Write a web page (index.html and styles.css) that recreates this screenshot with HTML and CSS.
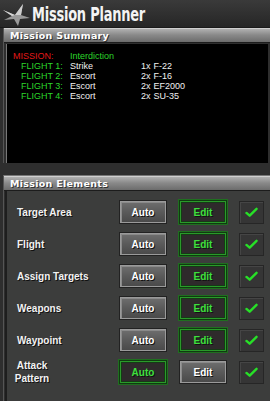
FILE: index.html
```html
<!DOCTYPE html>
<html>
<head>
<meta charset="utf-8">
<link rel="stylesheet" href="styles.css">
</head>
<body>
<div class="app">
  <div class="titlebar">
    <svg class="logo" width="30" height="28" viewBox="0 0 30 28">
      <path d="M2 10 L14 15 L22 4 L20 15 L29 18 L19 19 L17 26 L13 19 L3 20 L11 16 Z" fill="#9a9a9a"/>
      <path d="M14 15 L22 4 L20 15 Z" fill="#cfcfcf"/>
      <path d="M2 10 L14 15 L11 16 Z" fill="#d8d8d8"/>
    </svg>
    <h1 class="title">Mission Planner</h1>
  </div>

  <div class="section">
    <div class="header">Mission Summary</div>
    <div class="summary">
      <div class="srow"><span class="c1 red">MISSION:</span><span class="c2 green">Interdiction</span><span class="c3"></span></div>
      <div class="srow"><span class="c1 green ind">FLIGHT 1:</span><span class="c2">Strike</span><span class="c3"><span class="qty">1x</span>F-22</span></div>
      <div class="srow"><span class="c1 green ind">FLIGHT 2:</span><span class="c2">Escort</span><span class="c3"><span class="qty">2x</span>F-16</span></div>
      <div class="srow"><span class="c1 green ind">FLIGHT 3:</span><span class="c2">Escort</span><span class="c3"><span class="qty">2x</span>EF2000</span></div>
      <div class="srow"><span class="c1 green ind">FLIGHT 4:</span><span class="c2">Escort</span><span class="c3"><span class="qty">2x</span>SU-35</span></div>
    </div>
  </div>

  <div class="section elements-section">
    <div class="header">Mission Elements</div>
    <div class="elements">
      <div class="erow"><div class="label">Target Area</div><div class="btn">Auto</div><div class="btn on">Edit</div><div class="check"><svg viewBox="0 0 14 12" width="13" height="11"><path d="M1.5 6.5 L5 9.5 L12.5 2" fill="none" stroke="#27e027" stroke-width="2.6" stroke-linecap="round" stroke-linejoin="round"/></svg></div></div>
      <div class="erow"><div class="label">Flight</div><div class="btn">Auto</div><div class="btn on">Edit</div><div class="check"><svg viewBox="0 0 14 12" width="13" height="11"><path d="M1.5 6.5 L5 9.5 L12.5 2" fill="none" stroke="#27e027" stroke-width="2.6" stroke-linecap="round" stroke-linejoin="round"/></svg></div></div>
      <div class="erow"><div class="label">Assign Targets</div><div class="btn">Auto</div><div class="btn on">Edit</div><div class="check"><svg viewBox="0 0 14 12" width="13" height="11"><path d="M1.5 6.5 L5 9.5 L12.5 2" fill="none" stroke="#27e027" stroke-width="2.6" stroke-linecap="round" stroke-linejoin="round"/></svg></div></div>
      <div class="erow"><div class="label">Weapons</div><div class="btn">Auto</div><div class="btn on">Edit</div><div class="check"><svg viewBox="0 0 14 12" width="13" height="11"><path d="M1.5 6.5 L5 9.5 L12.5 2" fill="none" stroke="#27e027" stroke-width="2.6" stroke-linecap="round" stroke-linejoin="round"/></svg></div></div>
      <div class="erow"><div class="label">Waypoint</div><div class="btn">Auto</div><div class="btn on">Edit</div><div class="check"><svg viewBox="0 0 14 12" width="13" height="11"><path d="M1.5 6.5 L5 9.5 L12.5 2" fill="none" stroke="#27e027" stroke-width="2.6" stroke-linecap="round" stroke-linejoin="round"/></svg></div></div>
      <div class="erow"><div class="label center">Attack<br>Pattern</div><div class="btn on">Auto</div><div class="btn">Edit</div><div class="check"><svg viewBox="0 0 14 12" width="13" height="11"><path d="M1.5 6.5 L5 9.5 L12.5 2" fill="none" stroke="#27e027" stroke-width="2.6" stroke-linecap="round" stroke-linejoin="round"/></svg></div></div>
    </div>
  </div>
</div>
</body>
</html>
```
FILE: styles.css
```css
* { box-sizing: border-box; }
html, body { margin: 0; padding: 0; }
body {
  width: 270px;
  height: 401px;
  overflow: hidden;
  background: #2b2b2b;
  font-family: "Liberation Sans", Arial, sans-serif;
}
.app {
  width: 270px;
  height: 401px;
  display: flex;
  flex-direction: column;
  background: #2e2e2e;
}
.titlebar {
  height: 28px;
  display: flex;
  align-items: center;
  background: linear-gradient(#3a3a3a, #262626);
  border-bottom: 1px solid #1a1a1a;
}
.logo { flex: none; margin-left: 1px; }
.title {
  margin: 0 0 0 1px;
  font-family: "DejaVu Sans Condensed", "DejaVu Sans", sans-serif;
  font-weight: bold;
  font-stretch: condensed;
  font-size: 19px;
  color: #f4f4f4;
  letter-spacing: -0.3px;
  line-height: 28px;
  transform: scaleX(0.76);
  transform-origin: left center;
  white-space: nowrap;
}
.section {
  margin-left: 3px;
  display: flex;
  flex-direction: column;
  border-left: 1px solid #555;
}
.header {
  height: 15px;
  background: linear-gradient(#b0b0b0, #8a8a8a 45%, #6c6c6c);
  border-top: 1px solid #cfcfcf;
  border-bottom: 1px solid #1c1c1c;
  color: #fff;
  font-family: "DejaVu Sans", sans-serif;
  font-weight: bold;
  font-size: 9.5px;
  letter-spacing: 0.3px;
  line-height: 13px;
  padding-left: 6px;
  text-shadow: 1px 1px 0 #333;
}
.summary {
  height: 119px;
  margin: 1px 2px 0 2px;
  background: #000;
  border-left: 1px solid #777;
  padding-top: 7px;
  font-size: 9px;
  line-height: 10px;
  color: #f0f0f0;
}
.srow { display: flex; }
.c1 { width: 63px; padding-left: 6px; }
.c1.ind { padding-left: 14px; }
.c2 { width: 71px; }
.c3 { display: flex; }
.qty { margin-right: 3px; }
.red { color: #e01818; }
.green { color: #2bd62b; }
.elements-section {
  flex: 1;
  margin-top: 12px;
  border-top: 1px solid #777;
  padding-top: 0;
}
.elements {
  flex: 1;
  background: #3c3d3c;
  border-left: 2px solid #1e1e1e;
  margin-left: 1px;
  padding-top: 10px;
  display: flex;
  flex-direction: column;
  gap: 10px;
}
.erow {
  display: flex;
  align-items: center;
  height: 22px;
}
.label {
  width: 113px;
  padding-left: 10px;
  color: #f2f2f2;
  font-weight: bold;
  font-size: 10px;
  text-shadow: 1px 1px 0 #111;
}
.label.center { text-align: center; padding-left: 0; width: 50px; margin-right: 63px; line-height: 13px; }
.btn {
  width: 46px;
  height: 22px;
  margin-right: 14px;
  display: flex;
  align-items: center;
  justify-content: center;
  background: linear-gradient(#6e6e6e, #5a5a5a 50%, #4a4a4a);
  border: 1px solid #9a9a9a;
  box-shadow: 0 0 0 1px #222, inset 1px 1px 0 #8a8a8a;
  color: #fff;
  font-weight: bold;
  font-size: 10px;
  text-shadow: 1px 1px 0 #111;
}
.btn + .btn { margin-right: 13px; }
.btn.on {
  background: #2e2a2b;
  border: 1px solid #2a9a2a;
  box-shadow: 0 0 0 1px #113a11, 0 0 0 2px #1f6f1f, inset 0 0 0 1px #163a16;
  color: #3ee03e;
}
.check {
  width: 25px;
  height: 23px;
  display: flex;
  align-items: center;
  justify-content: center;
  background: #353535;
  border: 1px solid #262626;
  box-shadow: inset 1px 1px 0 #454545;
}
```
